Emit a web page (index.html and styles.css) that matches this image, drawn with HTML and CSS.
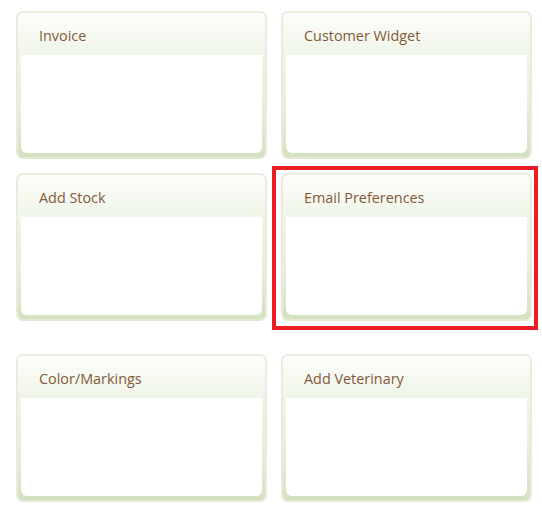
FILE: index.html
```html
<!DOCTYPE html>
<html lang="en">
<head>
  <meta charset="UTF-8" />
  <meta name="viewport" content="width=device-width, initial-scale=1.0"/>
  <title>Dashboard Widgets</title>
  <link rel="stylesheet" href="styles.css">
</head>
<body>
  <div class="grid">
    <div class="cell">
      <div class="card">
        <div class="card-head">Invoice</div>
        <div class="card-body"></div>
      </div>
    </div>
    <div class="cell">
      <div class="card">
        <div class="card-head">Customer Widget</div>
        <div class="card-body"></div>
      </div>
    </div>
    <div class="cell">
      <div class="card">
        <div class="card-head">Add Stock</div>
        <div class="card-body"></div>
      </div>
    </div>
    <div class="cell selected">
      <div class="card">
        <div class="card-head">Email Preferences</div>
        <div class="card-body"></div>
      </div>
    </div>
    <div class="cell last-row">
      <div class="card">
        <div class="card-head">Color/Markings</div>
        <div class="card-body"></div>
      </div>
    </div>
    <div class="cell last-row">
      <div class="card">
        <div class="card-head">Add Veterinary</div>
        <div class="card-body"></div>
      </div>
    </div>
  </div>
</body>
</html>
```

FILE: styles.css
```css
body {
  margin: 0;
  background: #fff;
  font-family: 'Open Sans', 'Noto Sans', sans-serif;
}

.grid {
  display: grid;
  grid-template-columns: 251px 251px;
  column-gap: 14px;
  row-gap: 14px;
  padding: 11px 0 0 16px;
}

.cell {
  position: relative;
}

.last-row {
  margin-top: 19px;
}

.selected::after {
  content: '';
  position: absolute;
  left: -9px;
  top: -7px;
  right: -6px;
  bottom: -9px;
  border: 4px solid #ee1c25;
  pointer-events: none;
}

.card {
  height: 148px;
  box-sizing: border-box;
  border: 2px solid #efe8dc;
  border-bottom-color: #e6e8d6;
  border-radius: 7px;
  background: linear-gradient(to bottom, #fdfefb 0%, #eff5e8 30%, #e6efdb 65%, #d2e2bf 100%);
  padding: 0 3px 4px;
  display: flex;
  flex-direction: column;
}

.card-head {
  height: 42px;
  padding: 13px 0 0 21px;
  box-sizing: border-box;
  font-size: 14.4px;
  color: #84593a;
  background: linear-gradient(to bottom, #fdfefb, #eff5e8);
  border-radius: 5px 5px 0 0;
  margin: 0 -3px;
}

.card-body {
  flex: 1;
  background: #fff;
  border-radius: 0 0 6px 6px;
}
```
